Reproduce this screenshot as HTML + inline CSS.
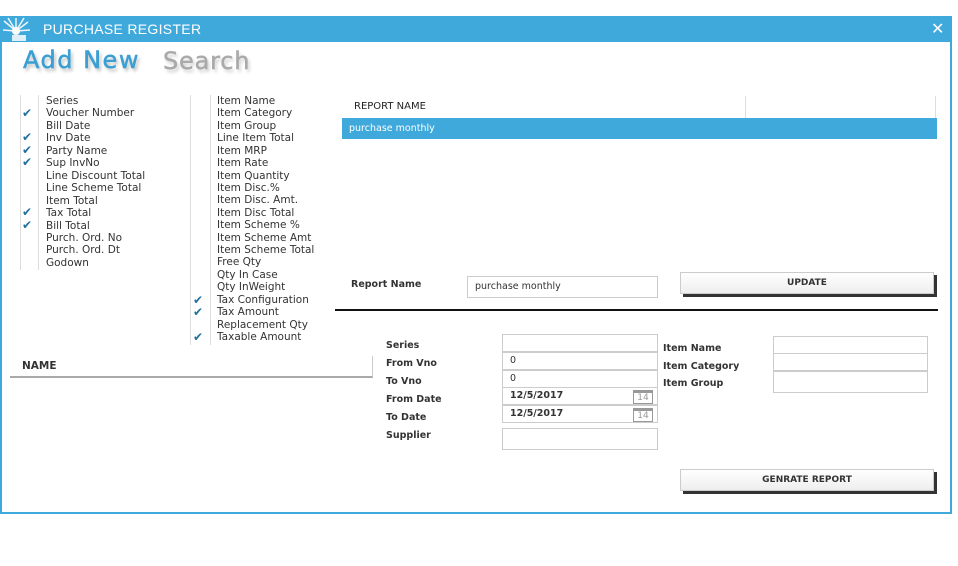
<!DOCTYPE html>
<html><head><meta charset="utf-8"><style>
*{margin:0;padding:0;box-sizing:border-box}
body{width:958px;height:566px;background:#fff;position:relative;overflow:hidden;font-family:"DejaVu Sans",sans-serif;color:#222}
.a{position:absolute}
.win{left:0;top:16px;width:952px;height:498px;border:2px solid #3fa9dc;border-top:none}
.tb{left:0;top:16px;width:952px;height:26px;background:#3fa9dc;color:#fff;font-family:"Liberation Sans",sans-serif;font-size:14px;line-height:26px;padding-left:43px;letter-spacing:.3px}
.cb{position:absolute;width:18px;height:12px;border-left:1px solid #ddd;border-bottom:1px solid #eee}
.lbl{position:absolute;font-size:10.5px;line-height:12px;color:#333;white-space:nowrap}
.ck{position:absolute;color:#1f6f9f;font-size:12px;line-height:12px;font-weight:bold}
.b{font-weight:bold;font-size:9.5px;color:#333}
.in{position:absolute;border:1px solid #ccc;background:#fff;font-size:9.5px;padding-left:7px;color:#333}
.btn{position:absolute;background:linear-gradient(#fff,#eee);border:1px solid #ccc;box-shadow:3px 3px 0 #333;font-size:9px;font-weight:bold;text-align:center;color:#333}
</style></head><body>
<div class="a win"></div>
<div class="a tb">PURCHASE REGISTER</div>
<svg class="a" style="left:2px;top:17px" width="32" height="25"><g stroke="#fff" stroke-width="1.5" opacity=".9"><line x1="14" y1="14" x2="2" y2="4"/><line x1="14" y1="14" x2="14" y2="1"/><line x1="14" y1="14" x2="26" y2="5"/><line x1="14" y1="14" x2="1" y2="13"/><line x1="14" y1="14" x2="28" y2="13"/><line x1="14" y1="14" x2="6" y2="1"/><line x1="14" y1="14" x2="22" y2="1"/></g><circle cx="14" cy="14" r="4" fill="#fff"/><rect x="10" y="18" width="14" height="6" fill="#dfeff8"/></svg>
<div class="a" style="left:931px;top:19px;color:#fff;font-size:16px">✕</div>
<div class="a" style="left:23px;top:46px;font-size:24px;color:#3a9fd2;letter-spacing:1.5px;-webkit-text-stroke:.5px #3a9fd2;text-shadow:2px 3px 3px #bbb">Add New</div>
<div class="a" style="left:163px;top:47px;font-size:24px;color:#aaa;letter-spacing:.8px;-webkit-text-stroke:.5px #aaa;text-shadow:2px 3px 3px #ccc">Search</div>

<div class="a" style="left:0;top:0">
<div class="cb" style="left:20px;top:95px;height:175px;border-bottom:none"></div>
<div class="lbl" style="left:46px;top:95px;line-height:12.46px">Series<br>Voucher Number<br>Bill Date<br>Inv Date<br>Party Name<br>Sup InvNo<br>Line Discount Total<br>Line Scheme Total<br>Item Total<br>Tax Total<br>Bill Total<br>Purch. Ord. No<br>Purch. Ord. Dt<br>Godown</div>
<div class="ck" style="left:22px;top:107px">✔</div>
<div class="ck" style="left:22px;top:131px">✔</div>
<div class="ck" style="left:22px;top:144px">✔</div>
<div class="ck" style="left:22px;top:156px">✔</div>
<div class="ck" style="left:22px;top:206px">✔</div>
<div class="ck" style="left:22px;top:219px">✔</div>
<div class="cb" style="left:190px;top:95px;height:250px;border-bottom:none"></div>
<div class="cb" style="left:210px;top:95px;width:1px;height:250px;border-bottom:none"></div>
<div class="cb" style="left:38px;top:95px;width:1px;height:175px;border-bottom:none"></div>
<div class="lbl" style="left:217px;top:95px;line-height:12.42px">Item Name<br>Item Category<br>Item Group<br>Line Item Total<br>Item MRP<br>Item Rate<br>Item Quantity<br>Item Disc.%<br>Item Disc. Amt.<br>Item Disc Total<br>Item Scheme %<br>Item Scheme Amt<br>Item Scheme Total<br>Free Qty<br>Qty In Case<br>Qty InWeight<br>Tax Configuration<br>Tax Amount<br>Replacement Qty<br>Taxable Amount</div>
<div class="ck" style="left:193px;top:294px">✔</div>
<div class="ck" style="left:193px;top:306px">✔</div>
<div class="ck" style="left:193px;top:331px">✔</div>
</div>

<div class="a" style="left:10px;top:356px;width:363px;height:22px;border-bottom:2px solid #aaa;border-right:1px solid #ccc"></div>
<div class="a b" style="left:22px;top:360px;font-size:10.5px">NAME</div>

<div class="a" style="left:745px;top:96px;width:1px;height:22px;background:#ddd"></div>
<div class="a" style="left:935px;top:96px;width:1px;height:22px;background:#ddd"></div>
<div class="a" style="left:354px;top:101px;font-size:10px;color:#222">REPORT NAME</div>
<div class="a" style="left:342px;top:118px;width:595px;height:21px;background:#3fa9dc;color:#fff;font-size:9.5px;line-height:21px;padding-left:7px">purchase monthly</div>

<div class="a b" style="left:351px;top:279px">Report Name</div>
<div class="in" style="left:467px;top:276px;width:191px;height:22px;line-height:20px">purchase monthly</div>
<div class="btn" style="left:680px;top:272px;width:254px;height:22px;line-height:20px">UPDATE</div>
<div class="a" style="left:335px;top:309px;width:603px;height:2px;background:#111"></div>

<div class="a b" style="left:386px;top:337px;line-height:18px">Series<br>From Vno<br>To Vno<br>From Date<br>To Date</div>
<div class="a b" style="left:386px;top:430px">Supplier</div>
<div class="in" style="left:502px;top:334px;width:156px;height:18px"></div>
<div class="in" style="left:502px;top:352px;width:156px;height:18px;line-height:16px">0</div>
<div class="in" style="left:502px;top:370px;width:156px;height:18px;line-height:16px">0</div>
<div class="in" style="left:502px;top:387px;width:156px;height:18px;line-height:16px;font-weight:bold">12/5/2017</div>
<div class="in" style="left:502px;top:405px;width:156px;height:18px;line-height:16px;font-weight:bold">12/5/2017</div>
<div class="a" style="left:633px;top:390px;width:20px;height:14px;border:1px solid #999;border-top:3px solid #999;font-size:9px;color:#999;text-align:center;line-height:11px">14</div>
<div class="a" style="left:633px;top:408px;width:20px;height:14px;border:1px solid #999;border-top:3px solid #999;font-size:9px;color:#999;text-align:center;line-height:11px">14</div>
<div class="in" style="left:502px;top:428px;width:156px;height:22px"></div>

<div class="a b" style="left:663px;top:340px;line-height:17.5px">Item Name<br>Item Category<br>Item Group</div>
<div class="in" style="left:773px;top:336px;width:155px;height:18px"></div>
<div class="in" style="left:773px;top:353px;width:155px;height:18px"></div>
<div class="in" style="left:773px;top:371px;width:155px;height:22px"></div>

<div class="btn" style="left:680px;top:469px;width:254px;height:22px;line-height:20px">GENRATE REPORT</div>
</body></html>
